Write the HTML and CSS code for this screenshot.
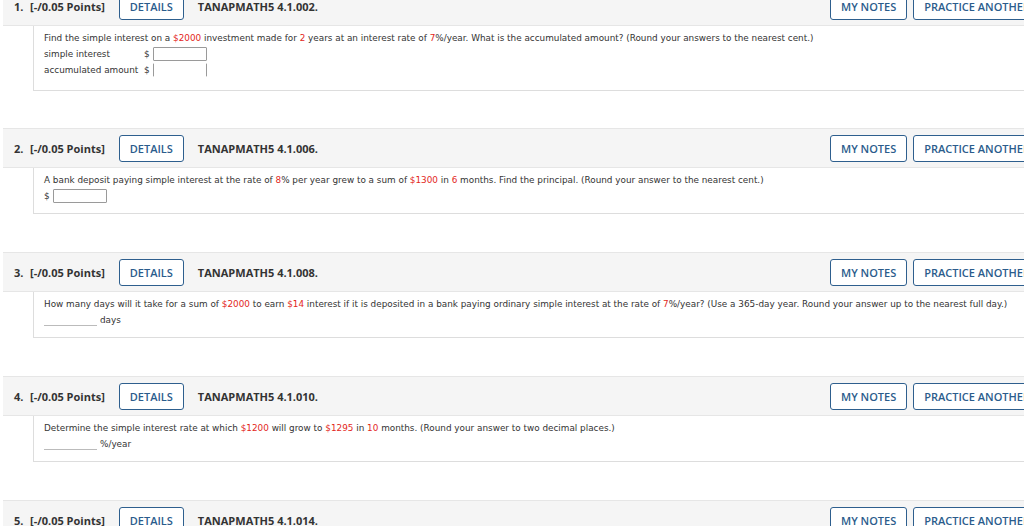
FILE: index.html
```html
<!DOCTYPE html>
<html>
<head>
<meta charset="utf-8">
<link rel="stylesheet" href="styles.css">
</head>
<body>
<div class="page">
  <section class="q q-first">
    <div class="qhead">
      <span class="num">1.</span><span class="pts">[-/0.05 Points]</span>
      <span class="btn details">DETAILS</span>
      <span class="code">TANAPMATH5 4.1.002.</span>
      <span class="spacer"></span>
      <span class="btn">MY NOTES</span>
      <span class="btn practice">PRACTICE ANOTHER</span>
    </div>
    <div class="qbody tall">
      <p class="line">Find the simple interest on a <span class="red">$2000</span> investment made for <span class="red">2</span> years at an interest rate of <span class="red">7</span>%/year. What is the accumulated amount? (Round your answers to the nearest cent.)</p>
      <div class="row"><span class="lbl">simple interest</span><span class="cur">$</span><span class="box"></span></div>
      <div class="row"><span class="lbl">accumulated amount</span><span class="cur">$</span><span class="box open"></span></div>
    </div>
  </section>

  <section class="q">
    <div class="qhead">
      <span class="num">2.</span><span class="pts">[-/0.05 Points]</span>
      <span class="btn details">DETAILS</span>
      <span class="code">TANAPMATH5 4.1.006.</span>
      <span class="spacer"></span>
      <span class="btn">MY NOTES</span>
      <span class="btn practice">PRACTICE ANOTHER</span>
    </div>
    <div class="qbody">
      <p class="line">A bank deposit paying simple interest at the rate of <span class="red">8</span>% per year grew to a sum of <span class="red">$1300</span> in <span class="red">6</span> months. Find the principal. (Round your answer to the nearest cent.)</p>
      <div class="row"><span class="cur">$</span><span class="box"></span></div>
    </div>
  </section>

  <section class="q">
    <div class="qhead">
      <span class="num">3.</span><span class="pts">[-/0.05 Points]</span>
      <span class="btn details">DETAILS</span>
      <span class="code">TANAPMATH5 4.1.008.</span>
      <span class="spacer"></span>
      <span class="btn">MY NOTES</span>
      <span class="btn practice">PRACTICE ANOTHER</span>
    </div>
    <div class="qbody">
      <p class="line">How many days will it take for a sum of <span class="red">$2000</span> to earn <span class="red">$14</span> interest if it is deposited in a bank paying ordinary simple interest at the rate of <span class="red">7</span>%/year? (Use a 365-day year. Round your answer up to the nearest full day.)</p>
      <div class="row"><span class="blank"></span><span class="unit">days</span></div>
    </div>
  </section>

  <section class="q">
    <div class="qhead">
      <span class="num">4.</span><span class="pts">[-/0.05 Points]</span>
      <span class="btn details">DETAILS</span>
      <span class="code">TANAPMATH5 4.1.010.</span>
      <span class="spacer"></span>
      <span class="btn">MY NOTES</span>
      <span class="btn practice">PRACTICE ANOTHER</span>
    </div>
    <div class="qbody">
      <p class="line">Determine the simple interest rate at which <span class="red">$1200</span> will grow to <span class="red">$1295</span> in <span class="red">10</span> months. (Round your answer to two decimal places.)</p>
      <div class="row"><span class="blank"></span><span class="unit">%/year</span></div>
    </div>
  </section>

  <section class="q">
    <div class="qhead">
      <span class="num">5.</span><span class="pts">[-/0.05 Points]</span>
      <span class="btn details">DETAILS</span>
      <span class="code">TANAPMATH5 4.1.014.</span>
      <span class="spacer"></span>
      <span class="btn">MY NOTES</span>
      <span class="btn practice">PRACTICE ANOTHER</span>
    </div>
  </section>
</div>
</body>
</html>
```

FILE: styles.css
```css
html, body {
  margin: 0;
  padding: 0;
  background: #ffffff;
  overflow: hidden;
}

.page {
  width: 1100px;
  margin-top: -14px;
  padding-left: 3px;
  font-family: "Open Sans", "Liberation Sans", sans-serif;
}

.q {
  margin-bottom: 38px;
}

.q.q-first {
  margin-bottom: 37px;
}

.qhead {
  display: flex;
  align-items: center;
  height: 38px;
  background: #f5f5f5;
  border-top: 1px solid #e6e6e6;
  border-bottom: 1px solid #e6e6e6;
  padding-left: 11px;
  font-size: 11px;
  font-weight: 700;
  color: #333333;
}

.num {
  min-width: 16px;
}

.pts {
  margin-right: 14px;
}

.btn {
  display: flex;
  align-items: center;
  justify-content: center;
  height: 25px;
  padding: 0 10px;
  border: 1px solid #2e5f8e;
  border-radius: 3px;
  color: #2b5c8c;
  background: #ffffff;
  font-size: 11px;
  font-weight: 600;
}

.code {
  margin-left: 14px;
}

.spacer {
  flex: 1;
}

.practice {
  margin-left: 6px;
  margin-right: 62px;
}

.qbody {
  margin-left: 30px;
  border-left: 1px solid #dddddd;
  border-bottom: 1px solid #dddddd;
  padding: 6px 10px 10px;
  height: 29px;
  font-family: "DejaVu Sans", Verdana, sans-serif;
  font-size: 8.85px;
  color: #333333;
}

.qbody.tall {
  height: 48px;
}

.line {
  margin: 0 0 2px;
  line-height: 12px;
}

.row {
  display: flex;
  align-items: center;
  height: 16px;
}

.lbl {
  width: 100px;
}

.cur {
  margin-right: 3px;
}

.box {
  width: 52px;
  height: 12px;
  border: 1px solid #9a9a9a;
  border-radius: 1px;
}

.box.open {
  border-top-color: #ffffff;
  border-bottom-color: #ffffff;
}

.blank {
  width: 53px;
  height: 11px;
  border-bottom: 1px solid #bbbbbb;
  margin-right: 3px;
}

.red {
  color: #e3261b;
}
```
